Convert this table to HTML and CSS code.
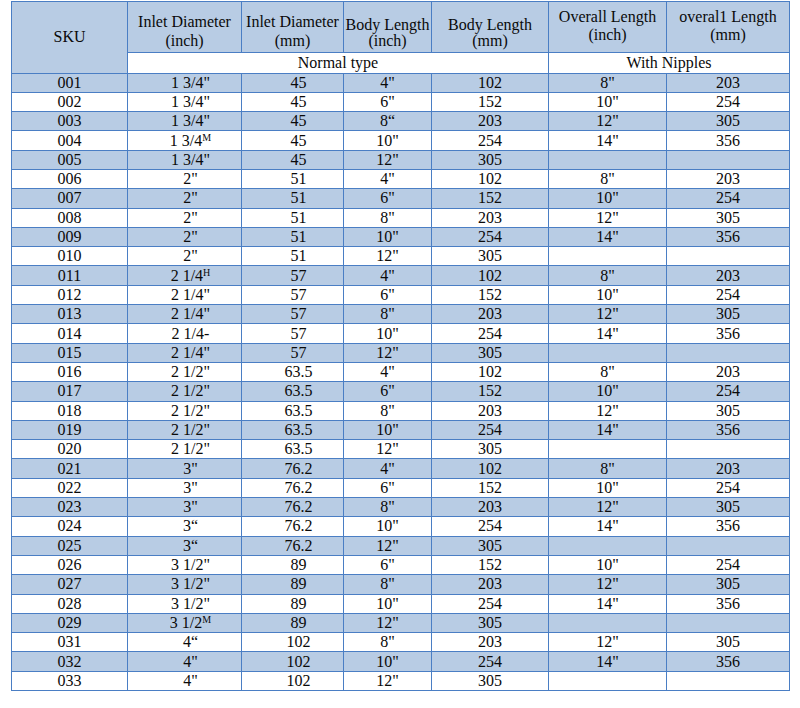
FILE: index.html
```html
<!DOCTYPE html>
<html>
<head>
<meta charset="utf-8">
<link rel="stylesheet" href="styles.css">
</head>
<body>
<table class="spec">
  <colgroup>
    <col class="c-sku"><col class="c-in"><col class="c-mm"><col class="c-bl"><col class="c-blmm"><col class="c-ol"><col class="c-olmm">
  </colgroup>
  <thead>
    <tr class="h1">
      <th rowspan="2" class="sku-h">SKU</th>
      <th class="h-inlet">Inlet Diameter<br>(inch)</th>
      <th class="h-inlet">Inlet Diameter<br>(mm)</th>
      <th class="h-body">Body Length<br>(inch)</th>
      <th class="h-body">Body Length<br>(mm)</th>
      <th class="h-over">Overall Length<br>(inch)</th>
      <th class="h-over">overal1 Length<br>(mm)</th>
    </tr>
    <tr class="h2">
      <th colspan="4">Normal type</th>
      <th colspan="2">With Nipples</th>
    </tr>
  </thead>
  <tbody>
    <tr><td>001</td><td class="in">1 3/4"</td><td class="mm">45</td><td>4"</td><td>102</td><td>8"</td><td>203</td></tr>
    <tr><td>002</td><td class="in">1 3/4"</td><td class="mm">45</td><td>6"</td><td>152</td><td>10"</td><td>254</td></tr>
    <tr><td>003</td><td class="in">1 3/4"</td><td class="mm">45</td><td>8“</td><td>203</td><td>12"</td><td>305</td></tr>
    <tr><td>004</td><td class="in">1 3/4<sup>M</sup></td><td class="mm">45</td><td>10"</td><td>254</td><td>14"</td><td>356</td></tr>
    <tr><td>005</td><td class="in">1 3/4"</td><td class="mm">45</td><td>12"</td><td>305</td><td></td><td></td></tr>
    <tr><td>006</td><td class="in">2"</td><td class="mm">51</td><td>4"</td><td>102</td><td>8"</td><td>203</td></tr>
    <tr><td>007</td><td class="in">2"</td><td class="mm">51</td><td>6"</td><td>152</td><td>10"</td><td>254</td></tr>
    <tr><td>008</td><td class="in">2"</td><td class="mm">51</td><td>8"</td><td>203</td><td>12"</td><td>305</td></tr>
    <tr><td>009</td><td class="in">2"</td><td class="mm">51</td><td>10"</td><td>254</td><td>14"</td><td>356</td></tr>
    <tr><td>010</td><td class="in">2"</td><td class="mm">51</td><td>12"</td><td>305</td><td></td><td></td></tr>
    <tr><td>011</td><td class="in">2 1/4<sup>H</sup></td><td class="mm">57</td><td>4"</td><td>102</td><td>8"</td><td>203</td></tr>
    <tr><td>012</td><td class="in">2 1/4"</td><td class="mm">57</td><td>6"</td><td>152</td><td>10"</td><td>254</td></tr>
    <tr><td>013</td><td class="in">2 1/4"</td><td class="mm">57</td><td>8"</td><td>203</td><td>12"</td><td>305</td></tr>
    <tr><td>014</td><td class="in">2 1/4-</td><td class="mm">57</td><td>10"</td><td>254</td><td>14"</td><td>356</td></tr>
    <tr><td>015</td><td class="in">2 1/4"</td><td class="mm">57</td><td>12"</td><td>305</td><td></td><td></td></tr>
    <tr><td>016</td><td class="in">2 1/2"</td><td class="mm">63.5</td><td>4"</td><td>102</td><td>8"</td><td>203</td></tr>
    <tr><td>017</td><td class="in">2 1/2"</td><td class="mm">63.5</td><td>6"</td><td>152</td><td>10"</td><td>254</td></tr>
    <tr><td>018</td><td class="in">2 1/2"</td><td class="mm">63.5</td><td>8"</td><td>203</td><td>12"</td><td>305</td></tr>
    <tr><td>019</td><td class="in">2 1/2"</td><td class="mm">63.5</td><td>10"</td><td>254</td><td>14"</td><td>356</td></tr>
    <tr><td>020</td><td class="in">2 1/2"</td><td class="mm">63.5</td><td>12"</td><td>305</td><td></td><td></td></tr>
    <tr><td>021</td><td class="in">3"</td><td class="mm">76.2</td><td>4"</td><td>102</td><td>8"</td><td>203</td></tr>
    <tr><td>022</td><td class="in">3"</td><td class="mm">76.2</td><td>6"</td><td>152</td><td>10"</td><td>254</td></tr>
    <tr><td>023</td><td class="in">3"</td><td class="mm">76.2</td><td>8"</td><td>203</td><td>12"</td><td>305</td></tr>
    <tr><td>024</td><td class="in">3“</td><td class="mm">76.2</td><td>10"</td><td>254</td><td>14"</td><td>356</td></tr>
    <tr><td>025</td><td class="in">3“</td><td class="mm">76.2</td><td>12"</td><td>305</td><td></td><td></td></tr>
    <tr><td>026</td><td class="in">3 1/2"</td><td class="mm">89</td><td>6"</td><td>152</td><td>10"</td><td>254</td></tr>
    <tr><td>027</td><td class="in">3 1/2"</td><td class="mm">89</td><td>8"</td><td>203</td><td>12"</td><td>305</td></tr>
    <tr><td>028</td><td class="in">3 1/2"</td><td class="mm">89</td><td>10"</td><td>254</td><td>14"</td><td>356</td></tr>
    <tr><td>029</td><td class="in">3 1/2<sup>M</sup></td><td class="mm">89</td><td>12"</td><td>305</td><td></td><td></td></tr>
    <tr><td>031</td><td class="in">4“</td><td class="mm">102</td><td>8"</td><td>203</td><td>12"</td><td>305</td></tr>
    <tr><td>032</td><td class="in">4"</td><td class="mm">102</td><td>10"</td><td>254</td><td>14"</td><td>356</td></tr>
    <tr><td>033</td><td class="in">4"</td><td class="mm">102</td><td>12"</td><td>305</td><td></td><td></td></tr>
  </tbody>
</table>
</body>
</html>
```

FILE: styles.css
```css
html, body {
  margin: 0;
  padding: 0;
  background: #ffffff;
}
body {
  padding: 1px 0 0 11px;
  font-family: "Liberation Serif", "Times New Roman", serif;
  font-size: 16px;
  color: #0a0a0a;
}
.spec {
  border-collapse: collapse;
  table-layout: fixed;
  width: 779px;
}
.c-sku { width: 116px; }
.c-in { width: 114px; }
.c-mm { width: 102px; }
.c-bl { width: 88px; }
.c-blmm { width: 117px; }
.c-ol { width: 118px; }
.c-olmm { width: 123px; }

.spec th, .spec td {
  border: 1px solid #4a7ec4;
  padding: 0;
  text-align: center;
  font-weight: normal;
  white-space: nowrap;
}
.spec .h1 {
  height: 50.5px;
}
.spec .h1 th {
  background: #b8cce4;
  vertical-align: top;
}
.spec .h1 th.sku-h {
  vertical-align: middle;
  padding-top: 0;
}
.spec .h-inlet {
  line-height: 18.5px;
  padding-top: 11px;
}
.spec .h-body {
  line-height: 16.3px;
  padding-top: 15px;
}
.spec .h-over {
  line-height: 17.5px;
  padding-top: 6px;
}
.spec .h2 {
  height: 21px;
}
.spec .h2 th {
  background: #ffffff;
  line-height: 18px;
  vertical-align: middle;
}
.spec tbody tr {
  height: 19.3px;
}
.spec tbody td {
  line-height: 18px;
  vertical-align: middle;
}
.spec tbody tr:nth-child(odd) td {
  background: #b8cce4;
}
.spec tbody tr:nth-child(even) td {
  background: #ffffff;
}
.spec td.in {
  padding-left: 12px;
}
.spec td.mm {
  padding-left: 12px;
}
.spec sup {
  font-size: 10px;
  line-height: 0;
  vertical-align: 5px;
}
```
